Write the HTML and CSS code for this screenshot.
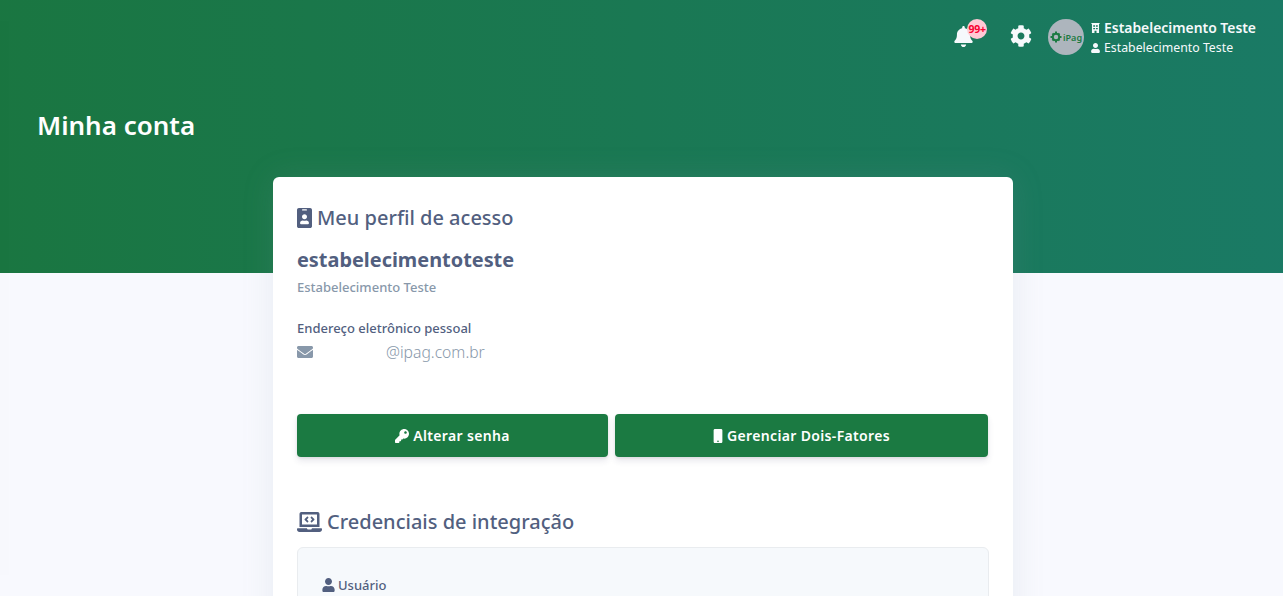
FILE: index.html
```html
<!DOCTYPE html>
<html lang="pt-BR">
<head>
<meta charset="utf-8">
<title>Minha conta</title>
<link rel="stylesheet" href="styles.css">
</head>
<body>
<div class="page">
  <div class="edge-shadow"></div>
  <header class="hero">
    <nav class="topbar">
      <div class="bell">
        <svg class="bell-icon" viewBox="0 0 448 512"><path d="M224 512c35.32 0 63.97-28.65 63.97-64H160.03c0 35.35 28.65 64 63.97 64zm215.39-149.71c-19.32-20.76-55.47-51.99-55.47-154.29 0-77.7-54.48-139.9-127.94-155.16V32c0-17.67-14.32-32-31.98-32s-31.98 14.33-31.98 32v20.84C118.56 68.1 64.08 130.3 64.08 208c0 102.3-36.15 133.53-55.47 154.29-6 6.45-8.66 14.16-8.61 21.71.11 16.4 12.98 32 32.1 32h383.8c19.12 0 32-15.6 32.1-32 .05-7.55-2.61-15.27-8.61-21.71z"/></svg>
        <span class="badge">99+</span>
      </div>
      <svg class="cog-icon" viewBox="0 0 512 512"><path d="M487.4 315.7l-42.6-24.6c4.3-23.2 4.3-47 0-70.2l42.6-24.6c4.9-2.8 7.1-8.6 5.5-14-11.1-35.6-30-67.8-54.7-94.6-3.8-4.1-10-5.1-14.8-2.3L380.8 110c-17.9-15.4-38.5-27.3-60.8-35.1V25.8c0-5.6-3.9-10.5-9.4-11.7-36.7-8.2-74.3-7.8-109.2 0-5.5 1.2-9.4 6.1-9.4 11.7V75c-22.2 7.9-42.8 19.8-60.8 35.1L88.7 85.5c-4.9-2.8-11-1.9-14.8 2.3-24.7 26.7-43.6 58.9-54.7 94.6-1.7 5.4.6 11.2 5.5 14L67.3 221c-4.3 23.2-4.3 47 0 70.2l-42.6 24.6c-4.9 2.8-7.1 8.6-5.5 14 11.1 35.6 30 67.8 54.7 94.6 3.8 4.1 10 5.1 14.8 2.3l42.6-24.6c17.9 15.4 38.5 27.3 60.8 35.1v49.2c0 5.6 3.9 10.5 9.4 11.7 36.7 8.2 74.3 7.8 109.2 0 5.5-1.2 9.4-6.1 9.4-11.7v-49.2c22.2-7.9 42.8-19.8 60.8-35.1l42.6 24.6c4.9 2.8 11 1.9 14.8-2.3 24.7-26.7 43.6-58.9 54.7-94.6 1.5-5.5-.7-11.3-5.6-14.1zM256 336c-44.1 0-80-35.9-80-80s35.9-80 80-80 80 35.9 80 80-35.9 80-80 80z"/></svg>
      <div class="avatar">
        <svg class="avatar-cog" viewBox="0 0 24 24"><circle cx="12" cy="12" r="6.5" fill="none" stroke="currentColor" stroke-width="4"/><path d="M10 1h4v5h-4zM10 18h4v5h-4zM1 10h5v4H1zM18 10h5v4h-5zM3.5 6.3l2.8-2.8 3.2 3.2-2.8 2.8zM14.5 17.3l2.8-2.8 3.2 3.2-2.8 2.8zM3.5 17.7l3.2-3.2 2.8 2.8-3.2 3.2zM14.5 6.7l3.2-3.2 2.8 2.8-3.2 3.2z"/></svg>
        <span class="avatar-text">iPag</span>
      </div>
      <div class="account">
        <div class="account-name">
          <svg class="account-icon" viewBox="0 0 9 11"><path fill-rule="evenodd" d="M0 0h9v1.2H8.4V11H5.6V8.4H3.4V11H.6V1.2H0zM2 2.4v1.8h2V2.4zM5 2.4v1.8h2V2.4zM2 5.4V7h2V5.4zM5 5.4V7h2V5.4z"/></svg>
          <span>Estabelecimento Teste</span>
        </div>
        <div class="account-user">
          <svg class="account-icon" viewBox="0 0 448 512"><path d="M224 256c70.7 0 128-57.3 128-128S294.7 0 224 0 96 57.3 96 128s57.3 128 128 128zm89.6 32h-16.7c-22.2 10.2-46.9 16-72.9 16s-50.6-5.8-72.9-16h-16.7C60.2 288 0 348.2 0 422.4V464c0 26.5 21.5 48 48 48h352c26.5 0 48-21.5 48-48v-41.6c0-74.2-60.2-134.4-134.4-134.4z"/></svg>
          <span>Estabelecimento Teste</span>
        </div>
      </div>
    </nav>
    <h1 class="page-title">Minha conta</h1>
  </header>

  <main class="content">
    <section class="card">
      <h2 class="section-title">
        <svg class="badge-icon" viewBox="0 0 384 512"><path d="M336 0H48C21.5 0 0 21.5 0 48v416c0 26.5 21.5 48 48 48h288c26.5 0 48-21.5 48-48V48c0-26.5-21.5-48-48-48zM144 32h96c8.8 0 16 7.2 16 16s-7.2 16-16 16h-96c-8.8 0-16-7.2-16-16s7.2-16 16-16zm48 128c35.3 0 64 28.7 64 64s-28.7 64-64 64-64-28.7-64-64 28.7-64 64-64zm112 236.8c0 10.6-10 19.2-22.4 19.2H102.4C90 416 80 407.4 80 396.8v-19.2c0-31.8 30.1-57.6 67.2-57.6h5c12.3 5.1 25.7 8 39.8 8s27.6-2.9 39.8-8h5c37.1 0 67.2 25.8 67.2 57.6v19.2z"/></svg>
        <span>Meu perfil de acesso</span>
      </h2>
      <p class="username">estabelecimentoteste</p>
      <p class="display-name">Estabelecimento Teste</p>
      <p class="field-label">Endereço eletrônico pessoal</p>
      <div class="email">
        <svg class="envelope-icon" viewBox="0 0 512 512"><path d="M502.3 190.8c3.9-3.1 9.7-.2 9.7 4.7V400c0 26.5-21.5 48-48 48H48c-26.5 0-48-21.5-48-48V195.6c0-5 5.7-7.8 9.7-4.7 22.4 17.4 52.1 39.5 154.1 113.6 21.1 15.4 56.7 47.8 92.2 47.6 35.7.3 72-32.8 92.3-47.6 102-74.1 131.6-96.3 154-113.7zM256 320c23.2.4 56.6-29.2 73.4-41.4 132.7-96.3 142.8-104.7 173.4-128.7 5.8-4.5 9.2-11.5 9.2-18.9v-19c0-26.5-21.5-48-48-48H48C21.5 64 0 85.5 0 112v19c0 7.4 3.4 14.3 9.2 18.9 30.6 23.9 40.7 32.4 173.4 128.7 16.8 12.2 50.2 41.8 73.4 41.4z"/></svg>
        <span class="email-text">@ipag.com.br</span>
      </div>
      <div class="actions">
        <button class="btn btn-password" type="button">
          <svg class="btn-icon" viewBox="0 0 512 512"><path d="M512 176.001C512 273.203 433.202 352 336 352c-11.22 0-22.19-1.062-32.827-3.069l-24.012 27.014A23.999 23.999 0 0 1 261.223 384H224v40c0 13.255-10.745 24-24 24h-40v40c0 13.255-10.745 24-24 24H24c-13.255 0-24-10.745-24-24v-78.059c0-6.365 2.529-12.47 7.029-16.971l161.802-161.802C163.108 213.814 160 195.271 160 176 160 78.798 238.797.001 335.999 0 433.488-.001 512 78.511 512 176.001zM336 128c0 26.51 21.49 48 48 48s48-21.49 48-48-21.49-48-48-48-48 21.49-48 48z"/></svg>
          <span>Alterar senha</span>
        </button>
        <button class="btn btn-factor" type="button">
          <svg class="btn-icon mobile" viewBox="0 0 320 512"><path d="M272 0H48C21.5 0 0 21.5 0 48v416c0 26.5 21.5 48 48 48h224c26.5 0 48-21.5 48-48V48c0-26.5-21.5-48-48-48zM160 480c-17.7 0-32-14.3-32-32s14.3-32 32-32 32 14.3 32 32-14.3 32-32 32z"/></svg>
          <span>Gerenciar Dois-Fatores</span>
        </button>
      </div>
      <h2 class="section-title credentials-title">
        <svg class="laptop-icon" viewBox="0 0 640 512"><path d="M255.03 261.65c6.25 6.25 16.38 6.25 22.63 0l11.31-11.31c6.25-6.25 6.25-16.38 0-22.63L253.25 192l35.71-35.72c6.25-6.25 6.25-16.38 0-22.63l-11.31-11.31c-6.25-6.25-16.38-6.25-22.63 0l-58.34 58.34c-6.25 6.25-6.25 16.38 0 22.63l58.35 58.34zm96.01-11.3l11.31 11.31c6.25 6.25 16.38 6.25 22.63 0l58.34-58.34c6.25-6.25 6.25-16.38 0-22.63l-58.34-58.34c-6.25-6.25-16.38-6.25-22.63 0l-11.31 11.31c-6.25 6.25-6.25 16.38 0 22.63L386.75 192l-35.71 35.72c-6.25 6.25-6.25 16.38 0 22.63zM624 416H381.54c-.74 19.81-14.71 32-32.74 32H288c-18.69 0-33.02-17.47-32.77-32H16c-8.8 0-16 7.2-16 16v16c0 35.2 28.8 64 64 64h512c35.2 0 64-28.8 64-64v-16c0-8.8-7.2-16-16-16zM576 48c0-26.4-21.6-48-48-48H112C85.6 0 64 21.6 64 48v336h512V48zm-64 272H128V64h384v256z"/></svg>
        <span>Credenciais de integração</span>
      </h2>
      <div class="panel">
        <p class="panel-label">
          <svg class="panel-icon" viewBox="0 0 448 512"><path d="M224 256c70.7 0 128-57.3 128-128S294.7 0 224 0 96 57.3 96 128s57.3 128 128 128zm89.6 32h-16.7c-22.2 10.2-46.9 16-72.9 16s-50.6-5.8-72.9-16h-16.7C60.2 288 0 348.2 0 422.4V464c0 26.5 21.5 48 48 48h352c26.5 0 48-21.5 48-48v-41.6c0-74.2-60.2-134.4-134.4-134.4z"/></svg>
          <span>Usuário</span>
        </p>
      </div>
    </section>
  </main>
</div>
</body>
</html>
```
FILE: styles.css
```css
* { box-sizing: border-box; }
html, body { margin: 0; padding: 0; }
body {
  background: #f8f9fe;
  font-family: "Noto Sans", "Open Sans", sans-serif;
  color: #525f7f;
}
svg { display: block; fill: currentColor; flex: none; }
p, h1, h2 { margin: 0; }

.page {
  position: relative;
  height: 596px;
  overflow: hidden;
}
.edge-shadow {
  position: absolute;
  top: 0;
  bottom: 0;
  left: -1px;
  width: 1px;
  box-shadow: 0 0 2rem 0 rgba(136, 152, 170, .15);
  z-index: 2;
}

.hero {
  height: 273px;
  background: linear-gradient(87deg, #1a7641 0, #1a7a65 100%);
  color: #fff;
  padding: 19px 27px 0 37px;
}
.topbar {
  display: flex;
  align-items: center;
  justify-content: flex-end;
  height: 36px;
}
.bell {
  position: relative;
  width: 21px;
  height: 22px;
}
.bell-icon { width: 19px; height: 21px; color: #f6f9fc; }
.badge {
  position: absolute;
  top: -7px;
  left: 13px;
  width: 20px;
  height: 20px;
  border-radius: 50%;
  background: #ffc9d5;
  color: #f80031;
  font-size: 10.5px;
  font-weight: 700;
  line-height: 20px;
  text-align: center;
  letter-spacing: -.3px;
}
.cog-icon { width: 22px; height: 22px; margin: 0 0 2px 35px; color: #f6f9fc; }
.avatar {
  display: flex;
  align-items: center;
  justify-content: center;
  gap: 1px;
  width: 36px;
  height: 36px;
  margin-left: 16px;
  border-radius: 50%;
  background: #adb5bd;
  color: #1b7a42;
}
.avatar-cog { width: 12px; height: 12px; }
.avatar-text { font-size: 9px; font-weight: 600; line-height: 1; }
.account { margin-left: 7px; }
.account-name, .account-user {
  display: flex;
  align-items: center;
  gap: 4px;
  color: #f6f9fc;
}
.account-name { font-size: 13.9px; font-weight: 600; line-height: 20px; }
.account-user { font-size: 12.3px; font-weight: 400; line-height: 18px; margin-top: 1px; margin-bottom: -1px; }
.account-icon { width: 9px; height: 10px; }

.page-title {
  margin-top: 52px;
  font-size: 26px;
  font-weight: 600;
  line-height: 36px;
  color: #fff;
}

.content { padding-left: 273px; }
.card {
  position: relative;
  width: 740px;
  margin-top: -96px;
  min-height: 600px;
  padding: 27px 24px 24px;
  background: #fff;
  border-radius: 6px;
  box-shadow: 0 0 2rem 0 rgba(136, 152, 170, .15);
}
.section-title {
  display: flex;
  align-items: center;
  gap: 5px;
  font-size: 20px;
  font-weight: 500;
  line-height: 28px;
  color: #525f7f;
}
.badge-icon { width: 15px; height: 20px; }
.username {
  margin-top: 14px;
  font-size: 19.9px;
  font-weight: 700;
  line-height: 28px;
  color: #525f7f;
}
.display-name {
  margin-top: 4px;
  font-size: 13px;
  font-weight: 500;
  line-height: 18px;
  color: #8898aa;
}
.field-label {
  margin-top: 23px;
  font-size: 13px;
  font-weight: 500;
  line-height: 18px;
  color: #525f7f;
}
.email {
  display: flex;
  align-items: center;
  height: 24px;
  margin-top: 3px;
  color: #8898aa;
}
.envelope-icon { width: 16px; height: 16px; }
.email-text {
  margin-left: 73px;
  font-size: 15.7px;
  font-weight: 300;
  line-height: 24px;
}
.actions {
  display: flex;
  gap: 7px;
  margin-top: 50px;
}
.btn {
  display: flex;
  align-items: center;
  justify-content: center;
  gap: 4px;
  height: 43px;
  padding: 0;
  border: 0;
  border-radius: 4px;
  background: #1b7a42;
  color: #fff;
  font-family: inherit;
  font-size: 14px;
  font-weight: 600;
  letter-spacing: .35px;
  box-shadow: 0 4px 6px rgba(50, 50, 93, .11), 0 1px 3px rgba(0, 0, 0, .08);
}
.btn-password { width: 311px; }
.btn-factor { width: 373px; }
.btn-icon { width: 14px; height: 14px; }
.btn-icon.mobile { width: 10px; }
.credentials-title { margin-top: 51px; gap: 5px; }
.laptop-icon { width: 25px; height: 20px; }
.panel {
  margin-top: 11px;
  width: 692px;
  height: 200px;
  padding: 28px 24px;
  background: #f6f9fc;
  border: 1px solid #e9ecef;
  border-radius: 6px;
}
.panel-label {
  display: flex;
  align-items: center;
  gap: 3px;
  font-size: 13px;
  font-weight: 500;
  line-height: 18px;
  color: #525f7f;
}
.panel-icon { width: 13px; height: 14px; }
```
